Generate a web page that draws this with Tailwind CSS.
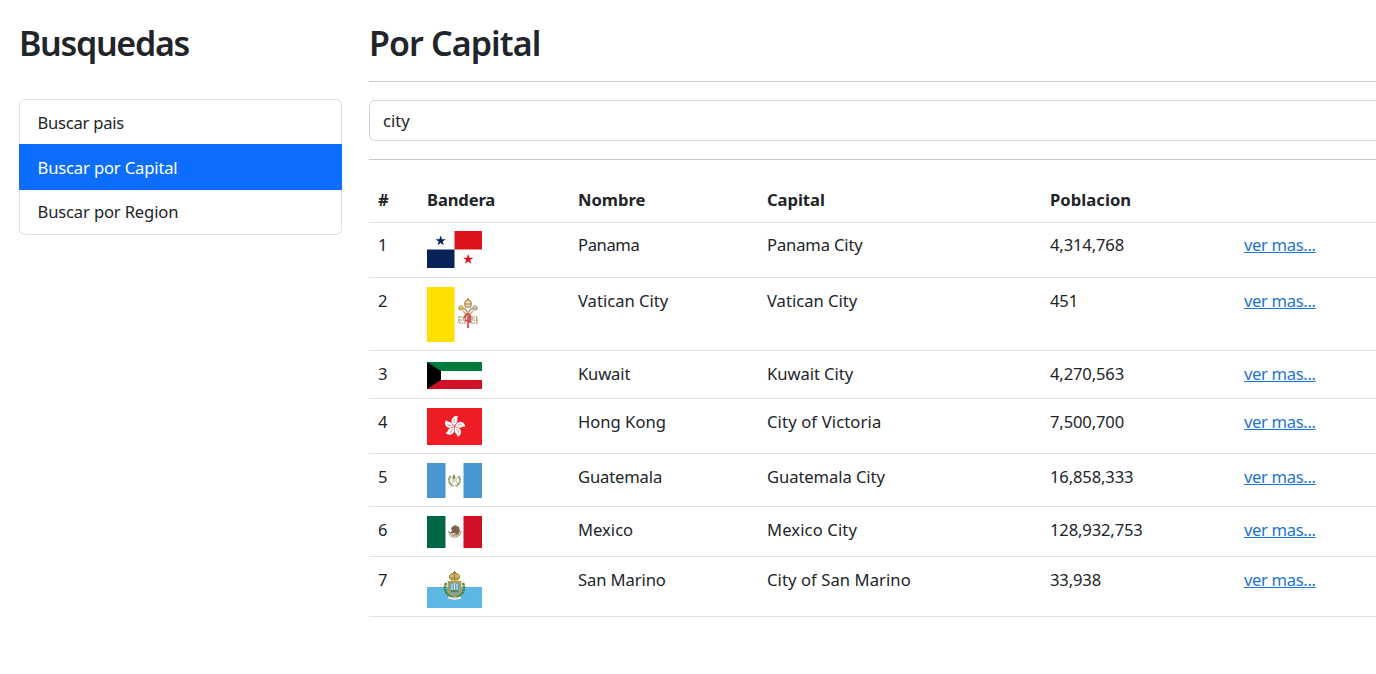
<!DOCTYPE html>
<html lang="es">
<head>
<meta charset="utf-8">
<title>Por Capital</title>
<script src="https://cdn.jsdelivr.net/npm/@tailwindcss/browser@4"></script>
</head>
<body class="h-[674px] overflow-hidden bg-white font-['Noto_Sans',sans-serif] text-[16.6px] leading-[27px] tracking-[-0.15px] text-[#212529]">
<div class="flex pt-[19px] pl-[19px]">
  <aside class="mr-[27px] w-[323px] shrink-0">
    <h1 class="h-[80px] text-[34px] leading-[49px] font-semibold tracking-[-1.3px]">Busquedas</h1>
    <nav class="flex h-[136px] flex-col">
      <a class="h-[45px] rounded-t-md border border-b-0 border-[#dee2e6] pt-[9px] pl-[17.500px] tracking-[-0.25px]">Buscar pais</a>
      <a class="h-[46px] bg-[#0d6efd] pt-[10px] pl-[18.500px] text-white">Buscar por Capital</a>
      <a class="h-[45px] rounded-b-md border border-t-0 border-[#dee2e6] pt-[8px] pl-[17.500px]">Buscar por Region</a>
    </nav>
  </aside>
  <main class="w-[1030px] shrink-0">
    <h1 class="h-[62px] text-[34px] leading-[49px] font-semibold tracking-[-0.9px]">Por Capital</h1>
    <hr class="border-[#c8c9ca]">
    <div class="mt-[18px] h-[41px] rounded-md border border-[#ced4da] pt-[6px] pl-[13px] tracking-normal">city</div>
    <hr class="mt-[18px] border-[#c8c9ca]">
    <div class="mt-[17px] *:grid *:grid-cols-[49px_151px_189px_283px_194px_164px] *:border-b *:border-[#dee2e6] *:pl-[9px]">
      <div class="h-[46px] pt-[9px] font-bold"><span>#</span><span>Bandera</span><span class="tracking-normal">Nombre</span><span class="tracking-[-0.05px]">Capital</span><span class="tracking-[0.05px]">Poblacion</span></div>
      <div class="h-[55px] pt-[8px]"><span>1</span>
        <svg class="h-[37px] w-[55px]" viewBox="0 0 55 37"><path fill="#db141c" d="M27.500 0H55v18.500H27.500z"/><path fill="#072357" d="M0 18.500h27.500V37H0z"/><path fill="#072357" d="M13.700 4.500l1.300 3.700h3.900l-3.200 2.300 1.200 3.800-3.200-2.300-3.200 2.300 1.200-3.800-3.200-2.300h3.900z"/><path fill="#db141c" d="M41.200 23l1.300 3.700h3.900l-3.200 2.300 1.200 3.800-3.200-2.300-3.200 2.300 1.200-3.800-3.200-2.300h3.900z"/></svg>
        <span class="tracking-[-0.4px]">Panama</span><span>Panama City</span><span>4,314,768</span><a class="tracking-[-0.35px] text-[#2274d2] underline">ver mas...</a></div>
      <div class="h-[73px] pt-[9px]"><span>2</span>
        <svg class="h-[55px] w-[55px]" viewBox="0 0 55 55"><path fill="#ffe000" d="M0 0h27.500v55H0z"/><g fill="none" stroke-width="1.600"><path stroke="#b9a57a" d="M33 21l5 1 8 10M49 21l-5 1-8 10"/><path stroke="#b79d6b" fill="#eee0b8" d="M38.500 20c-2-4 0-7 2.500-7s4.500 3 2.500 7zM38 17h6"/><circle cx="34" cy="21" r="2" stroke="#c9ab51"/><circle cx="48" cy="21" r="2" stroke="#aaa"/><path stroke="#c8b071" d="M36 24l5 5 5-5"/><path stroke="#b5a384" stroke-dasharray="1.500 .8" d="M32 30h6v6h-6zM44 30h6v6h-6zM31 33h9M42 33h9"/><path stroke="#d9424b" stroke-width="1.700" d="M38 31c0-5 5-5 5-1v5l-5-2m3-4v12"/></g><path fill="#b88a2a" d="M40.300 11h1.500v2h-1.500z"/></svg>
        <span class="tracking-normal">Vatican City</span><span class="tracking-normal">Vatican City</span><span>451</span><a class="tracking-[-0.35px] text-[#2274d2] underline">ver mas...</a></div>
      <div class="h-[48px] pt-[9px]"><span>3</span>
        <svg class="mt-[2px] h-[27px] w-[55px]" viewBox="0 0 55 27"><path fill="#007a3d" d="M0 0h55v9H0z"/><path fill="#fff" d="M0 9h55v9H0z"/><path fill="#ce1126" d="M0 18h55v9H0z"/><path d="M0 0l14 9v9L0 27z"/></svg>
        <span>Kuwait</span><span class="tracking-[-0.05px]">Kuwait City</span><span>4,270,563</span><a class="tracking-[-0.35px] text-[#2274d2] underline">ver mas...</a></div>
      <div class="h-[55px] pt-[9px]"><span>4</span>
        <svg class="h-[37px] w-[55px]" viewBox="0 0 55 37"><path fill="#ee1c25" d="M0 0h55v37H0z"/><defs><g id="petal"><path fill="#fff" d="M0-.5C-3-2-5.500-5-3.500-8-2.500-10-.5-11 1.500-10.500 0-9 1.800-7.500 1.800-5.500 1.800-3.500 0-3 0-.5z"/><path d="M-.3-3.500c-1.500-1-2-2.500-1-4" fill="none" stroke="#ee1c25" stroke-width=".5"/></g></defs><g transform="translate(27.500 18.500)"><use href="#petal" transform="rotate(12)"/><use href="#petal" transform="rotate(84)"/><use href="#petal" transform="rotate(156)"/><use href="#petal" transform="rotate(228)"/><use href="#petal" transform="rotate(300)"/></g></svg>
        <span class="tracking-normal">Hong Kong</span><span class="tracking-[0.13px]">City of Victoria</span><span>7,500,700</span><a class="tracking-[-0.35px] text-[#2274d2] underline">ver mas...</a></div>
      <div class="h-[53px] pt-[9px]"><span>5</span>
        <svg class="h-[35px] w-[55px]" viewBox="0 0 55 35"><path fill="#4997d0" d="M0 0h18.500v35H0zM36.500 0H55v35H36.500z"/><g fill="none"><path stroke="#91a26b" stroke-width="2" stroke-dasharray="2 .3" d="M23.500 13c-3 4-1 9 3 10M31.500 13c3 4 1 9-3 10"/><path stroke="#b9b58d" stroke-width="1" d="M24 21l7-7M31 21l-7-7"/></g><path fill="#ded9b8" d="M25 14h5v5h-5z"/><path fill="#719166" d="M26 12h2v4h-2z"/></svg>
        <span>Guatemala</span><span class="tracking-[-0.08px]">Guatemala City</span><span>16,858,333</span><a class="tracking-[-0.35px] text-[#2274d2] underline">ver mas...</a></div>
      <div class="h-[50px] pt-[9px]"><span>6</span>
        <svg class="h-[32px] w-[55px]" viewBox="0 0 55 32"><path fill="#006847" d="M0 0h18.500v32H0z"/><path fill="#ce1126" d="M36.500 0H55v32H36.500z"/><path fill="none" stroke="#a1aa83" stroke-width="1.600" stroke-dasharray="2 .5" d="M22 15c0 8 11 8 12 0"/><path fill="#8b6242" d="M24 12l4-3 4 2 1 4-2 4-4-2-4 1 2-3z"/><path fill="none" stroke="#52696a" d="M23 17l4-2 4 4m-6-8l6 4"/><path fill="#c79c65" d="M25 18h5v2h-5z"/></svg>
        <span class="tracking-normal">Mexico</span><span class="tracking-[0.12px]">Mexico City</span><span>128,932,753</span><a class="tracking-[-0.35px] text-[#2274d2] underline">ver mas...</a></div>
      <div class="h-[60px] pt-[9px]"><span>7</span>
        <svg class="h-[42px] w-[55px]" viewBox="0 0 55 42"><path fill="#5eb6e4" d="M0 21h55v21H0z"/><path fill="none" stroke="#55833b" stroke-width="2.500" stroke-dasharray="2.500 .5" d="M19 17c-3 7 1 13 7 14M36 17c3 7-1 13-7 14"/><path fill="#d5b760" stroke="#987c34" d="M24 14c-4-5 0-6.500 3.500-6.500s7.500 1.500 3.500 6.500z"/><path fill="none" stroke="#987c34" d="M27.500 5v9M26 6.500h3M24 12h7"/><path fill="#65a4c4" stroke="#b59843" stroke-width="1.800" d="M21.500 16h12v7c0 4-3.500 5-6 7-2.500-2-6-3-6-7z"/><path fill="none" stroke="#e1e8de" d="M25 18v6M27.500 17v7M30 18v6"/><path fill="none" stroke="#507b37" stroke-width="1.500" d="M24 25h7"/><path fill="none" stroke="#ede9d2" stroke-width="1.800" d="M21 31.500l6.500 1.500 6.500-1.500"/></svg>
        <span class="tracking-[-0.1px]">San Marino</span><span class="tracking-[0.08px]">City of San Marino</span><span>33,938</span><a class="tracking-[-0.35px] text-[#2274d2] underline">ver mas...</a></div>
    </div>
  </main>
</div>
</body>
</html>
